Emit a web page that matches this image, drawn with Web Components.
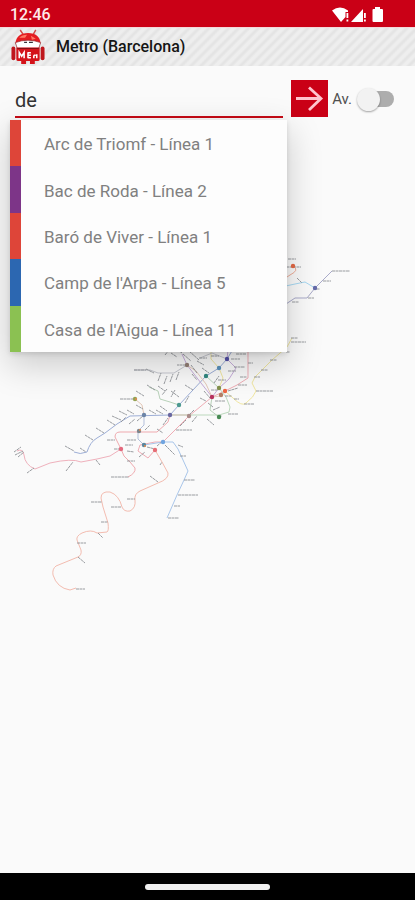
<!DOCTYPE html>
<html lang="es">
<head>
<meta charset="utf-8">
<meta name="viewport" content="width=device-width, initial-scale=1">
<title>Metro (Barcelona)</title>
<style>
body { margin: 0; background: #fafafa; font-family: Roboto, "Liberation Sans", sans-serif; }
</style>
</head>
<body>
<metro-app></metro-app>
<script>
const define = (name, html) => {
  const template = document.createElement('template');
  template.innerHTML = html;
  customElements.define(name, class extends HTMLElement {
    constructor() {
      super();
      this.attachShadow({ mode: 'open' }).append(template.content.cloneNode(true));
    }
  });
};

define('status-bar', `
<style>
:host { display: flex; align-items: center; justify-content: space-between; height: 27px; box-sizing: border-box; padding: 2px 30px 0 10px; background: #ca0016; color: #ffe9e9; font-size: 16px; font-weight: 500; line-height: 24px; }
svg { display: block; }
</style>
<span>12:46</span>
<svg width="53" height="18" viewBox="0 0 53 18" fill="#fff" role="img" aria-label="Wifi, cobertura y batería">
<path d="M0 4.500Q8-1.500 16 4.500V6H13.500V11L9 16Z"/><path d="M14.500 7h1.800v5h-1.800zM14.500 13.500h1.800v2h-1.800z"/>
<path d="M19 16 31 3V16ZM32 7h1.800v5H32zM32 13.500h1.800v2H32z"/>
<path d="M43 1h5v2h2q1 0 1 1v11q0 1-1 1h-8.500q-1 0-1-1V4q0-1 1-1H43Z"/>
</svg>`);

define('app-bar', `
<style>
:host { display: flex; align-items: center; gap: 9px; height: 39px; box-sizing: border-box; padding: 0 9px; color: #151515; border-top: 1px solid #f3d8da;
 background: repeating-linear-gradient(-45deg, #eeeeee 0 2px, #e4e4e4 4px 5px, #eeeeee 7px); }
h1 { margin: 0; font-size: 16px; line-height: 20px; font-weight: 500; }
svg { display: block; flex: none; }
</style>
<svg width="38" height="36" viewBox="0 0 38 37" aria-hidden="true">
<path d="M11 1l4 6M27 1l-4 7" stroke="#d34a48" stroke-width="1.500"/>
<path d="M6 15Q7 4 19 4T32 15Z" fill="#e41c21"/>
<path d="M10 9q3-3 8-3l-2 3zM22 7l5 3-4 1z" fill="#ff7965"/>
<path d="M6 14q13-5 26 0l-2 6H8Z" fill="#fff" stroke="#8d1c20" stroke-width=".7"/>
<path d="M15 13h3v1.500h-3zM20 13h4v1.500h-4z" fill="#36333a"/>
<rect x="2" y="18" width="4" height="14" rx="2" fill="#bf171d"/><rect x="32" y="18" width="4" height="14" rx="2" fill="#bf171d"/>
<path d="M7 19h24v12q0 2-2 2h-3v3h-5v-3h-4v3h-5v-3H9q-2 0-2-2Z" fill="#d4131a"/>
<path d="M10 30v-6l2.500 4 2.500-4v6M19 24v6M19 24.500h3M19 27h3M19 29.500h3M25 27v3M25 27h2M28 26v4" fill="none" stroke="#fff" stroke-width="1.600"/>
<path d="M8 20h22" stroke="#801015"/>
</svg>
<h1><slot></slot></h1>`);

define('station-option', `
<style>
:host { display: flex; flex: 1; }
button { flex: 1; display: flex; align-items: center; border: 0; border-left: 11px solid var(--line); background: none; padding: 2px 12px 0 23px; font: 17px/24px Roboto, "Liberation Sans", sans-serif; color: #808080; text-align: left; }
</style>
<button type="button"><slot></slot></button>`);

define('station-search', `
<style>
:host { display: block; position: relative; z-index: 1; flex: 1; min-width: 0; }
input { display: block; width: calc(100% - 9px); height: 38px; box-sizing: border-box; margin-left: 5px; border: 0; border-bottom: 2px solid #c60b16; border-radius: 0; padding: 4px 0 0; outline: 0; background: transparent; font: 20px/28px Roboto, "Liberation Sans", sans-serif; color: #333; }
nav { position: absolute; top: 40px; left: 0; right: 0; height: 232px; display: flex; flex-direction: column; background: #fdfdfd; box-shadow: 0 2px 5px rgba(0,0,0,.12), 0 12px 32px 2px rgba(0,0,0,.18); }
</style>
<input type="text" value="de" aria-label="Estación" autocomplete="off">
<nav aria-label="Estaciones"><slot></slot></nav>`);

define('go-button', `
<style>
:host { display: block; flex: none; }
button { display: grid; place-items: center; width: 37px; height: 37px; padding: 0; border: 0; background: #ca0016; }
svg { display: block; }
</style>
<button type="button" aria-label="Ir"><svg width="37" height="37" viewBox="0 0 37 37" fill="none" stroke="#ffc5ce" stroke-width="2.800"><path d="M5 18.500H30M18 7.500 30 18.500 18 30"/></svg></button>`);

define('toggle-switch', `
<style>
:host { display: block; flex: none; }
label { display: flex; align-items: center; gap: 5px; font-size: 15px; line-height: 20px; color: #505050; }
input { appearance: none; display: grid; align-items: center; margin: 0; width: 37px; height: 24px; }
input::before, input::after { content: ""; grid-area: 1 / 1; }
input::before { height: 16px; margin-left: 6px; border-radius: 8px; background: #adadad; }
input::after { width: 23px; height: 23px; border-radius: 50%; background: #f2f2f2; box-shadow: 0 1px 2px rgba(0,0,0,.35); }
input:checked::after { justify-self: end; }
</style>
<label><slot></slot><input type="checkbox" role="switch"></label>`);

const routes = [
  ['#9daed6', 'M74 452Q80 455 87 452 90 442 97 438L105 433 117 424 130 416 170 415 179 405 206 376 219 368 227 359 235 346'],
  ['#efb1bc', 'M17 451Q23 448 24 455 25 465 35 469L50 463Q72 458 81 462L97 459 110 456 121 449'],
  ['#f3bcb0', 'M155 450 162 462 168 473Q169 479 158 483L140 491Q134 494 135 500 136 508 130 511 124 512 122 507 119 495 110 492 101 491 101 498L103 507 108 523Q109 531 107 532L97 533Q91 529 82 533 76 536 77 540L81 550Q82 555 78 557L56 566Q52 569 53 575 57 588 70 590L76 588'],
  ['#efaaaf', 'M128 477Q136 473 135 468L130 462 124 456 121 449 115 437Q115 432 120 432H157L168 422 170 415H189'],
  ['#efadb5', 'M155 450 148 458 138 451 140 445 155 442 163 442 189 416 212 397 225 391 237 385 248 378V345'],
  ['#a9c6ea', 'M144 445 163 442H173L178 449 188 471 184 480 177 495 167 518'],
  ['#b3bfda', 'M144 415V425L138 431V439L144 445'],
  ['#bcd8bd', 'M170 415H219L229 412 230 407 226 397 219 388 206 376'],
  ['#b8d1b9', 'M219 417 210 410 212 397M179 405 170 402 160 399 158 391 149 387'],
  ['#c7addb', 'M228 350 227 359 236 368 229 379 219 388 212 397 201 383 187 365 182 354'],
  ['#f0e6a0', 'M292 338 287 347 272 360 255 377 252 383 256 391Q254 397 246 403 242 407 233 398L225 391M211 348V359L219 368 223 378 219 388'],
  ['#e4c8b8', 'M135 399 142 405 144 415M187 365 196 371 206 384 212 397 221 396'],
  ['#f0ad98', 'M293 266Q300 270 290 275L281 281'],
  ['#a7d9f3', 'M281 287 295 284 305 282 315 288'],
  ['#a9aac9', 'M332 271 315 288 307 298H295L286 304'],
  ['#c7c9d1', 'M134 370H150L158 373H174L187 365M200 358 212 353 227 359'],
];
const labels = [
  'M14 452l7-5M15 455l8-4M18 457l6-5M27 473l7-5M66 471l7-9M96 460l4 5M65 446l9 5M80 448l6 4M85 435l8 5M96 428l8 5M107 420l8 5M119 411l8 4M112 416l9 4M127 410l7 4M136 405l7 4',
  'M134 370h12M158 381l3-8M164 384l3-8M170 382l3-8M176 380l3-8M146 369l8 4M165 355l4-5M171 353l6 4M174 347l8 6M183 354l8 7M189 351l10 9M186 365h-9M191 365l6 8M197 361l7 4M202 368l7 5',
  'M120 399h14M147 385l8 5M136 391l8 5M158 386l7 5M167 389l-5 6M175 390l-4 7M179 397l-8-6M185 385l8 5M192 374l5 6M185 403l4-7M187 417l7-7M180 426l6-6M192 422l5-6',
  'M121 422l5-5M129 424l6-5M137 421l6-5M149 410l7 4M156 410l7 4M160 406l7 5M163 425l5-7M157 429l6 4M145 430l5-5M176 430h16M127 440h9M125 445h8M127 451l7 1M139 457l6-5M147 447l8 2M157 446l7-6M165 445l10 10',
  'M107 440h8M114 449h7M111 477h18M127 461h8M150 476l8 6M160 465l2-3M127 499h8M111 507h10M91 502h11M101 522h7M98 533l5 5M77 543h9M78 557l7 6M76 589h9',
  'M178 445l5 2M180 456h6M184 480h11M178 495h20M174 506h6M168 518h11M207 419l7 6M213 410l7-3M218 416h4M228 414h10M200 398l6 3M214 383l5-7M218 380h8M228 371h8M234 367h11',
  'M199 358h8M211 356h8M231 359h9M236 354h10M248 363h5M240 377h7M238 385h9M254 377h6M261 370h7M270 360h7M256 391h17M244 404h10M234 399h5M225 396h7M211 390h7M215 401h10M204 391l6 7M208 403l5 4M228 391l10-3',
  'M332 271h18M323 281h8M316 289h4M308 298h6M292 302h7M297 278l5 5M288 259h8M291 338h7M291 342h15M286 352h4M286 267h15'
];
const stops = [
  [135,399,'#95a354'],[144,415,'#6d85a7'],[139,431,'#7d858c'],[144,445,'#5a879e'],[121,449,'#e4697d'],[155,450,'#e66d75'],[163,442,'#70a5e0'],[170,415,'#6968a0'],[179,405,'#4b9990'],[189,416,'#a98c89'],[206,376,'#31887f'],[187,365,'#927e75'],[212,397,'#b8325f'],[219,388,'#83924c'],[225,391,'#ee6643'],[221,395,'#b27f65'],[219,368,'#5a91bb'],[227,359,'#5450a6'],[219,417,'#488b54'],[315,288,'#656baa'],[293,266,'#e36844']
];
define('metro-map', `
<style>
:host { display: block; }
svg { display: block; width: 100%; height: auto; }
</style>
<svg viewBox="0 66 415 600" fill="none" role="img" aria-label="Plano del metro">
<g stroke-width="1" stroke-linejoin="round">${routes.map(([c, d]) => `<path stroke="${c}" d="${d}"/>`).join('')}</g>
<path stroke="#8e9296" stroke-width=".9" stroke-dasharray="3 .5" d="${labels.join('')}"/>
${stops.map(([x, y, c]) => `<circle cx="${x}" cy="${y}" r="2.200" fill="${c}"/>`).join('')}
<g fill="#e58b4f"><circle cx="136" cy="399" r="1"/><circle cx="140" cy="430" r="1"/><circle cx="145" cy="446" r="1"/></g>
</svg>`);

define('gesture-bar', `
<style>
:host { display: grid; place-items: center; height: 27px; background: #000; }
i { display: block; width: 30%; height: 6px; border-radius: 3px; background: #f0f0f0; }
</style><i></i>`);

const stations = [
  ['#de4539', 'Arc de Triomf - Línea 1'],
  ['#7d3588', 'Bac de Roda - Línea 2'],
  ['#de4539', 'Baró de Viver - Línea 1'],
  ["#2c67b1", "Camp de l'Arpa - Línea 5"],
  ["#8bc152", "Casa de l'Aigua - Línea 11"],
];
define('metro-app', `
<style>
:host { display: flex; flex-direction: column; min-height: 100vh; }
main { flex: 1; position: relative; }
metro-map { position: absolute; top: 0; left: 0; right: 0; }
form { position: relative; display: flex; align-items: flex-start; padding: 14px 21px 0 10px; }
go-button { margin-left: 4px; }
toggle-switch { margin: 7px 0 0 4px; }
</style>
<status-bar></status-bar>
<app-bar>Metro (Barcelona)</app-bar>
<main>
<metro-map></metro-map>
<form>
<station-search>${stations.map(([c, t]) => `<station-option style="--line:${c}">${t}</station-option>`).join('')}</station-search>
<go-button></go-button>
<toggle-switch>Av.</toggle-switch>
</form>
</main>
<gesture-bar></gesture-bar>`);
</script>
</body>
</html>
